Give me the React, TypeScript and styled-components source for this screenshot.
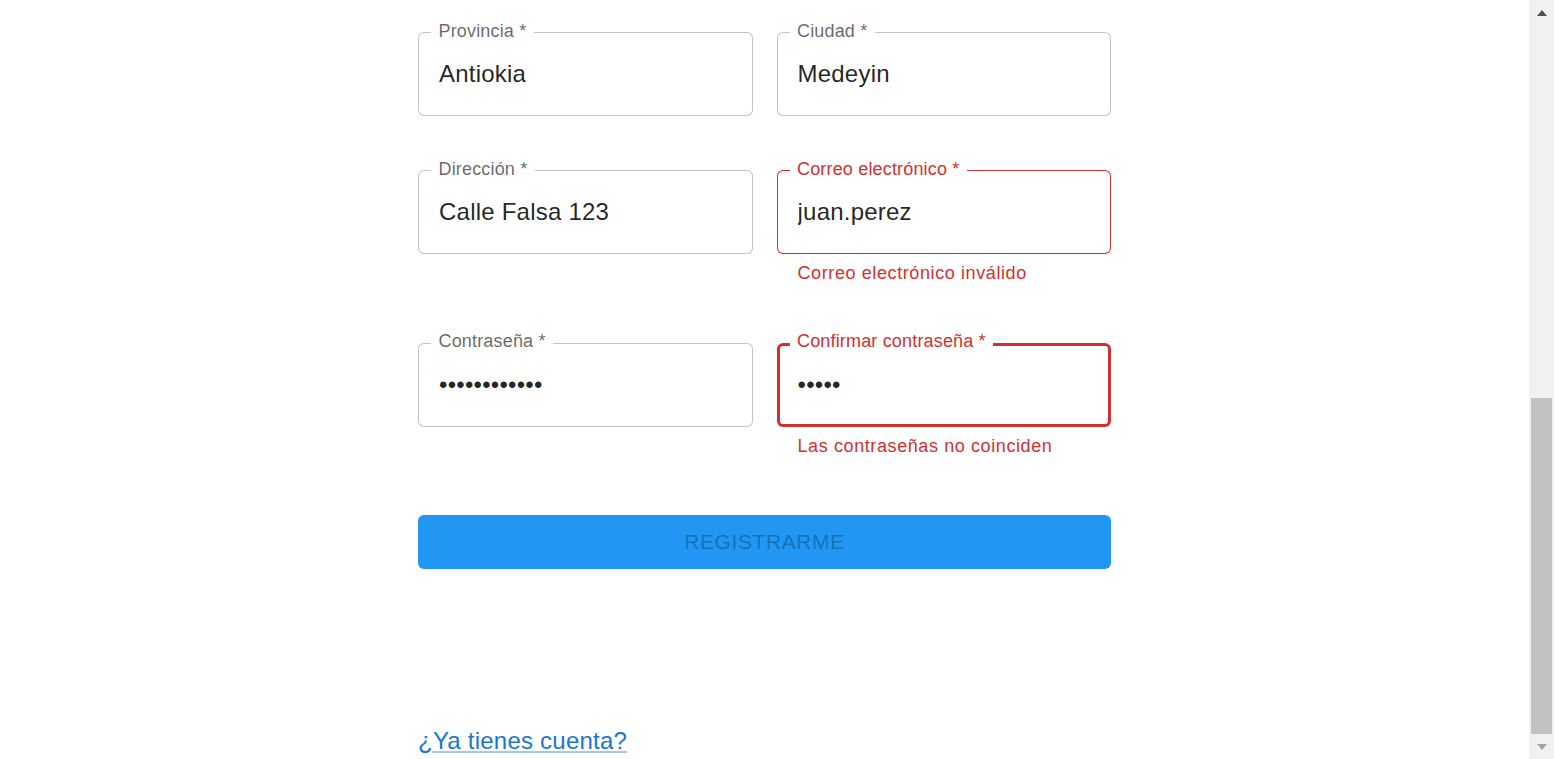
import React from "react";
import styled, { createGlobalStyle, css } from "styled-components";

const GlobalStyle = createGlobalStyle`
  html, body {
    margin: 0;
    padding: 0;
    height: 100%;
    overflow: hidden;
    background: #ffffff;
    font-family: "Liberation Sans", Arial, Helvetica, sans-serif;
  }
  #root { height: 100%; }
  * { box-sizing: border-box; }
`;

const Page = styled.div`
  display: flex;
  flex-direction: row;
  height: 100vh;
  width: 100%;
`;

const Main = styled.main`
  flex: 1;
  display: flex;
  justify-content: center;
  align-items: flex-start;
  overflow: hidden;
`;

const Form = styled.form`
  width: 693px;
  padding-top: 32px;
  display: flex;
  flex-direction: column;
  gap: 54px;
  flex-shrink: 0;

  & > * {
    flex-shrink: 0;
  }
`;

const Row = styled.div`
  display: grid;
  grid-template-columns: 1fr 1fr;
  column-gap: 24px;
`;

const Field = styled.div`
  display: flex;
  flex-direction: column;
`;

type Status = "normal" | "error" | "focusedError";

const Box = styled.div<{ $status: Status }>`
  position: relative;
  height: 84px;
  border-radius: 6px;
  box-shadow: inset 0 0 0 1px #c4c4c4;
  ${(p) =>
    p.$status === "error" &&
    css`
      box-shadow: inset 0 0 0 1px #d32f2f;
    `}
  ${(p) =>
    p.$status === "focusedError" &&
    css`
      box-shadow: inset 0 0 0 3px #d32f2f;
    `}
`;

const Label = styled.label<{ $status: Status }>`
  position: absolute;
  left: 13px;
  top: -10.5px;
  padding: 0 7.5px;
  background: #ffffff;
  font-size: 18px;
  line-height: 18px;
  letter-spacing: 0.00938em;
  white-space: nowrap;
  color: ${(p) => (p.$status === "normal" ? "rgba(0,0,0,0.6)" : "#d32f2f")};
`;

const Input = styled.input`
  display: block;
  width: 100%;
  height: 84px;
  padding: 0 21px;
  border: none;
  outline: none;
  background: transparent;
  font-family: "Liberation Sans", Arial, Helvetica, sans-serif;
  font-size: 24px;
  letter-spacing: 0.00938em;
  color: rgba(0, 0, 0, 0.87);
`;

const Helper = styled.p`
  margin: 4px 21px 0;
  font-size: 18px;
  line-height: 30.5px;
  letter-spacing: 0.03333em;
  color: #d32f2f;
`;

const SubmitButton = styled.button`
  display: block;
  width: 100%;
  height: 54px;
  padding: 0;
  border: none;
  border-radius: 6px;
  background: #2196f3;
  color: rgba(0, 0, 0, 0.26);
  font-family: "Liberation Sans", Arial, Helvetica, sans-serif;
  font-size: 21px;
  letter-spacing: 0.02857em;
  text-transform: uppercase;
  cursor: default;
`;

const Footer = styled.div`
  margin-top: 100px;
  padding-bottom: 400px;
`;

const LoginLink = styled.a`
  font-size: 24px;
  line-height: 1.5;
  color: #1976d2;
  text-decoration: underline;
  text-decoration-color: rgba(25, 118, 210, 0.4);
  letter-spacing: 0.00938em;
`;

const Scrollbar = styled.div`
  width: 25px;
  height: 100%;
  background: #f1f1f1;
  display: flex;
  flex-direction: column;
  flex-shrink: 0;
`;

const ArrowButton = styled.div`
  height: 25px;
  display: flex;
  align-items: center;
  justify-content: center;
  flex-shrink: 0;
`;

const Track = styled.div`
  flex: 1;
  display: flex;
  flex-direction: column;
  justify-content: flex-end;
`;

const Thumb = styled.div`
  height: 336px;
  margin: 0 2px;
  background: #c1c1c1;
`;

type FieldProps = {
  label: string;
  value: string;
  type?: string;
  status?: Status;
  helper?: string;
};

function TextField({ label, value, type = "text", status = "normal", helper }: FieldProps) {
  return (
    <Field>
      <Box $status={status}>
        <Label $status={status}>{label} *</Label>
        <Input type={type} defaultValue={value} readOnly />
      </Box>
      {helper && <Helper>{helper}</Helper>}
    </Field>
  );
}

export default function App() {
  return (
    <>
      <GlobalStyle />
      <Page>
        <Main>
          <Form onSubmit={(e) => e.preventDefault()}>
            <Row>
              <TextField label="Provincia" value="Antiokia" />
              <TextField label="Ciudad" value="Medeyin" />
            </Row>
            <Row>
              <TextField label="Dirección" value="Calle Falsa 123" />
              <TextField
                label="Correo electrónico"
                value="juan.perez"
                status="error"
                helper="Correo electrónico inválido"
              />
            </Row>
            <Row>
              <TextField label="Contraseña" value="contrasena12" type="password" />
              <TextField
                label="Confirmar contraseña"
                value="12345"
                type="password"
                status="focusedError"
                helper="Las contraseñas no coinciden"
              />
            </Row>
            <SubmitButton type="button">Registrarme</SubmitButton>
            <Footer>
              <LoginLink href="#">¿Ya tienes cuenta?</LoginLink>
            </Footer>
          </Form>
        </Main>
        <Scrollbar>
          <ArrowButton>
            <svg width="10" height="6" viewBox="0 0 10 6">
              <polygon points="0,6 5,0 10,6" fill="#505050" />
            </svg>
          </ArrowButton>
          <Track>
            <Thumb />
          </Track>
          <ArrowButton>
            <svg width="10" height="6" viewBox="0 0 10 6">
              <polygon points="0,0 10,0 5,6" fill="#a3a3a3" />
            </svg>
          </ArrowButton>
        </Scrollbar>
      </Page>
    </>
  );
}
